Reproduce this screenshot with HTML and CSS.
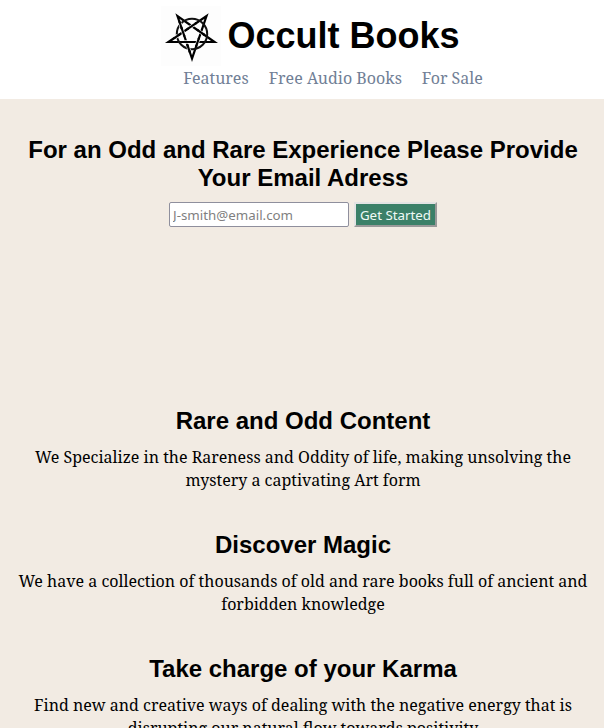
FILE: index.html
```html
<!DOCTYPE html>
<html lang="en">
<head>
<meta charset="utf-8">
<meta name="viewport" content="width=device-width, initial-scale=1">
<title>Occult Books</title>
<link rel="stylesheet" href="styles.css">
</head>
<body>
<header class="header">
  <div class="brand">
    <svg class="logo" viewBox="0 1 60 60" aria-hidden="true">
      <g fill="none" stroke-miterlimit="10">
        <path d="M31 53.5L16.5 11L53.5 37H7.5L45.5 11Z" stroke="#000" stroke-width="2.2"/>
        <!-- ring, with gaps where the arms cross over it -->
        <circle cx="31" cy="29" r="15.2" stroke="#111" stroke-width="2"/>
        <g stroke="#fdfdfd" stroke-width="3.4">
          <path d="M18.9 18L20.2 22M14 32.6L17 30.5M27 41.8L28.3 45.5"/>
        </g>
        <g stroke="#000" stroke-width="2.2">
          <path d="M18.2 16L20.9 24M13 33.3L19 29.1M26.3 39.7L29 47.6"/>
        </g>
        <!-- strands that pass over at each crossing -->
        <g stroke="#fdfdfd" stroke-width="3.4">
          <path d="M21 24.2L23 30M27.5 23.4L34 18.9M37.5 25.8L42 28.9M37.5 34.4L35.6 40M23.5 37H28"/>
        </g>
        <g stroke="#000" stroke-width="2.2">
          <path d="M20.6 23L23.5 31.5M26 24.4L35.5 17.9M36 24.7L43.5 30M38 32.9L35.1 41.4M22 37H29.5"/>
        </g>
      </g>
    </svg>
    <h1 class="title">Occult Books</h1>
  </div>
  <nav class="nav">
    <a href="#features">Features</a>
    <a href="#audio">Free Audio Books</a>
    <a href="#sale">For Sale</a>
  </nav>
</header>
<main class="main">
  <section class="hero">
    <h2>For an Odd and Rare Experience Please Provide Your Email Adress</h2>
    <form class="form">
      <input class="email" type="email" placeholder="J-smith@email.com" aria-label="Email address">
      <button class="submit" type="submit">Get Started</button>
    </form>
  </section>
  <div class="features" id="features">
    <section class="feature">
      <h2>Rare and Odd Content</h2>
      <p>We Specialize in the Rareness and Oddity of life, making unsolving the mystery a captivating Art form</p>
    </section>
    <section class="feature">
      <h2>Discover Magic</h2>
      <p>We have a collection of thousands of old and rare books full of ancient and forbidden knowledge</p>
    </section>
    <section class="feature">
      <h2>Take charge of your Karma</h2>
      <p>Find new and creative ways of dealing with the negative energy that is disrupting our natural flow towards positivity</p>
    </section>
  </div>
</main>
</body>
</html>
```
FILE: styles.css
```css
* { box-sizing: border-box; margin: 0; padding: 0; }
body { background: #f2ebe3; color: #000; font-family: "Noto Serif", "Droid Serif", serif; font-size: 16px; line-height: 23px; text-align: center; }
h1, h2 { font-family: "Liberation Sans", Arial, sans-serif; font-weight: bold; }
.header { background: #fff; padding: 6px 0 9px; }
.brand { display: flex; justify-content: center; align-items: center; gap: 6px; padding-left: 17px; }
.logo { width: 60px; height: 60px; background: #fdfdfd; }
.title { font-size: 36px; line-height: 40px; }
.nav { display: flex; justify-content: center; gap: 20px; margin-top: 1px; padding-left: 62px; }
.nav a { color: #718096; text-decoration: none; }
h2 { font-size: 24px; line-height: 28px; }
.main { padding: 0 16px 0 18px; }
.hero { padding-top: 37px; min-height: 308px; }
.form { display: flex; justify-content: center; gap: 5px; margin-top: 10px; }
.email, .submit { font-family: "Noto Sans", sans-serif; height: 25px; }
.email { width: 180px; padding: 1px 3px; border: 1px solid #8f8f9d; border-radius: 2px; background: #fff; }
.email::placeholder { color: #7f7f7f; }
.submit { width: 83px; background: #3b8068; color: #effaf6; border: 2px solid; border-color: #e3e3e3 #999 #999 #e3e3e3; }
.feature { margin-bottom: 39px; }
.feature p { margin-top: 11px; }
```
